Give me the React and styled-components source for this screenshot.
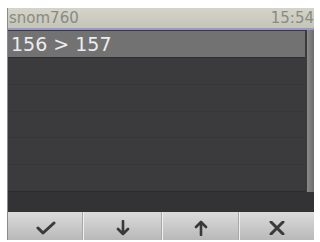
import React from 'react'
import styled, { createGlobalStyle } from 'styled-components';

const Global = createGlobalStyle`
  html, body {
    margin: 0;
    padding: 0;
    background: #ffffff;
  }
`;

const rows = [
  { label: '156 > 157', selected: true },
  { label: '' },
  { label: '' },
  { label: '' },
  { label: '' },
  { label: '' },
];

const keys = ['check', 'down', 'up', 'close'];

const KeyIcon = ({ kind }) => {
  if (kind === 'check') {
    return (
      <svg width="20" height="14" viewBox="0 0 20 14">
        <path d="M2 7 L7 12 L18 2" fill="none" stroke="#3a3a3a" strokeWidth="3" strokeLinecap="round" strokeLinejoin="round" />
      </svg>
    );
  }
  if (kind === 'down') {
    return (
      <svg width="14" height="16" viewBox="0 0 14 16">
        <path d="M7 1 V14 M2 9 L7 14 L12 9" fill="none" stroke="#3a3a3a" strokeWidth="2.6" strokeLinecap="round" strokeLinejoin="round" />
      </svg>
    );
  }
  if (kind === 'up') {
    return (
      <svg width="14" height="16" viewBox="0 0 14 16">
        <path d="M7 15 V2 M2 7 L7 2 L12 7" fill="none" stroke="#3a3a3a" strokeWidth="2.6" strokeLinecap="round" strokeLinejoin="round" />
      </svg>
    );
  }
  return (
    <svg width="16" height="14" viewBox="0 0 16 14">
      <path d="M2 1 L14 13 M14 1 L2 13" fill="none" stroke="#3a3a3a" strokeWidth="3" strokeLinecap="round" />
    </svg>
  );
};

const App = () => {
  return (
    <Page>
      <Global />
      <Screen>
        <TitleBar>
          <span>snom760</span>
          <span>15:54</span>
        </TitleBar>
        <ListArea>
          <Rows>
            {rows.map((r, i) => (
              <Row key={i} selected={r.selected}>{r.label}</Row>
            ))}
          </Rows>
          <ScrollTrack />
        </ListArea>
        <Spacer />
        <SoftKeys>
          {keys.map((k) => (
            <SoftKey key={k}>
              <KeyIcon kind={k} />
            </SoftKey>
          ))}
        </SoftKeys>
      </Screen>
    </Page>
  );
};

export default App;

const Page = styled.div`
  width: 320px;
  height: 242px;
  padding: 8px 6px 2px 7px;
  box-sizing: border-box;
  background: #ffffff;
`;

const Screen = styled.div`
  width: 307px;
  height: 232px;
  display: flex;
  flex-direction: column;
  background: #3a3a3c;
  border-left: 1px solid #8a8a8a;
  box-sizing: border-box;
  font-family: "DejaVu Sans", sans-serif;
  overflow: hidden;
`;

const TitleBar = styled.div`
  height: 20px;
  display: flex;
  justify-content: space-between;
  align-items: center;
  padding: 0 0 0 1px;
  background: linear-gradient(#d4d4ca, #c4c4b8);
  border-bottom: 2px solid #9a98c8;
  color: #8a8a82;
  font-size: 15px;
  line-height: 20px;
`;

const ListArea = styled.div`
  display: flex;
  height: 162px;
  padding-top: 1px;
  box-sizing: border-box;
`;

const Rows = styled.div`
  flex: 1;
  display: flex;
  flex-direction: column;
`;

const Row = styled.div`
  height: 26px;
  border-bottom: 1px solid ${(p) => (p.selected ? '#2e2e30' : '#363638')};
  background: ${(p) => (p.selected ? '#727272' : '#3b3b3d')};
  color: #ececec;
  font-size: 19px;
  line-height: 26px;
  padding-left: 3px;
  white-space: pre;

  &:last-child {
    border-bottom-color: #2a2a2c;
  }
`;

const ScrollTrack = styled.div`
  width: 7px;
  margin-left: 2px;
  margin-top: -1px;
  background: linear-gradient(90deg, #8a8a8a, #6c6c6c);
`;

const Spacer = styled.div`
  flex: 1;
  background: #333335;
`;

const SoftKeys = styled.div`
  height: 28px;
  display: grid;
  grid-template-columns: 76px 79px 77px 1fr;
  background: linear-gradient(#dcdcdc, #b8b8b8);
`;

const SoftKey = styled.div`
  display: flex;
  align-items: center;
  justify-content: center;
  border-right: 1px solid #f0f0f0;
  box-shadow: inset -1px 0 0 #a8a8a8;
  padding-top: 4px;

  &:last-child {
    border-right: none;
    box-shadow: none;
  }
`;
